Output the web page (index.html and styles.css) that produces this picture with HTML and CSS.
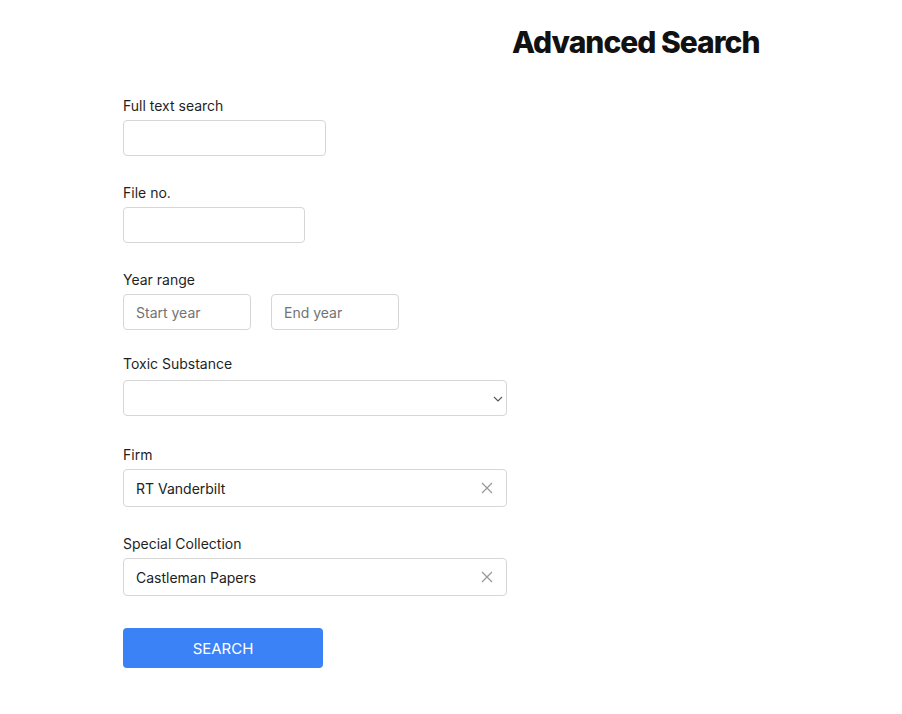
FILE: index.html
```html
<!DOCTYPE html>
<html lang="en">
  <head>
    <meta charset="UTF-8" />
    <meta name="viewport" content="width=device-width, initial-scale=1.0" />
    <title>Advanced Search</title>
    <link rel="stylesheet" href="styles.css">
  </head>
  <body>
    <header class="page-header">
      <h1>Advanced Search</h1>
    </header>

    <form class="search-form">
      <div class="field">
        <label for="fullText">Full text search</label>
        <input type="text" id="fullText" class="text-input w-wide" />
      </div>

      <div class="field">
        <label for="fileNo">File no.</label>
        <input type="text" id="fileNo" class="text-input w-mid" />
      </div>

      <div class="field field-range">
        <label for="startYear">Year range</label>
        <div class="year-range">
          <input type="text" id="startYear" class="text-input w-year" placeholder="Start year" />
          <input type="text" id="endYear" class="text-input w-year" placeholder="End year" />
        </div>
      </div>

      <div class="field field-select">
        <label for="substance">Toxic Substance</label>
        <div class="select-box">
          <select id="substance">
            <option></option>
          </select>
          <svg class="chevron" width="10" height="6" viewBox="0 0 10 6">
            <path d="M1 1l4 4 4-4" fill="none" stroke="#555" stroke-width="1.1" />
          </svg>
        </div>
      </div>

      <div class="field">
        <label>Firm</label>
        <div class="combo">
          <span class="combo-value">RT Vanderbilt</span>
          <svg class="clear" width="12" height="12" viewBox="0 0 12 12">
            <path d="M1 1l10 10M11 1L1 11" stroke="#9a9a9a" stroke-width="1.3" />
          </svg>
        </div>
      </div>

      <div class="field">
        <label>Special Collection</label>
        <div class="combo">
          <span class="combo-value">Castleman Papers</span>
          <svg class="clear" width="12" height="12" viewBox="0 0 12 12">
            <path d="M1 1l10 10M11 1L1 11" stroke="#9a9a9a" stroke-width="1.3" />
          </svg>
        </div>
      </div>

      <button type="button" class="search-btn">SEARCH</button>
    </form>
  </body>
</html>
```

FILE: styles.css
```css
body {
  font-family: "Inter", "Liberation Sans", sans-serif;
  margin: 0;
  color: #1f1f1f;
  background: #fff;
}
.page-header {
  padding: 24px 0 0 512px;
}
h1 {
  margin: 0;
  font-size: 30px;
  line-height: 36px;
  font-weight: 800;
  letter-spacing: -1px;
  color: #111;
}
.search-form {
  padding: 36px 0 40px 123px;
}
.field {
  margin-bottom: 27px;
}
.field-range {
  margin-bottom: 24px;
}
.field-select {
  margin-bottom: 29px;
}
.field-select label {
  margin-bottom: 6px;
}
label {
  display: block;
  font-size: 14px;
  line-height: 20px;
  margin-bottom: 4px;
  color: #1f1f1f;
}
.text-input {
  display: block;
  box-sizing: border-box;
  height: 36px;
  border: 1px solid #d6d6d6;
  border-radius: 4px;
  padding: 0 12px;
  font-family: inherit;
  font-size: 14px;
  color: #222;
  outline: none;
}
.text-input::placeholder {
  color: #737373;
}
.w-wide {
  width: 203px;
}
.w-mid {
  width: 182px;
}
.w-year {
  width: 128px;
}
.year-range {
  display: flex;
  gap: 20px;
}
.select-box {
  position: relative;
  width: 384px;
}
.select-box select {
  display: block;
  width: 100%;
  height: 36px;
  border: 1px solid #d6d6d6;
  border-radius: 4px;
  background: #fff;
  appearance: none;
  font-family: inherit;
  font-size: 14px;
  outline: none;
}
.chevron {
  position: absolute;
  right: 4px;
  top: 16px;
  pointer-events: none;
}
.combo {
  display: flex;
  align-items: center;
  justify-content: space-between;
  box-sizing: border-box;
  width: 384px;
  height: 38px;
  padding: 0 13px 0 12px;
  border: 1px solid #d6d6d6;
  border-radius: 4px;
}
.combo-value {
  font-size: 14px;
  color: #222;
}
.search-btn {
  display: block;
  width: 200px;
  height: 40px;
  margin-top: 32px;
  border: none;
  border-radius: 4px;
  background-color: #3b82f6;
  color: #fff;
  font-family: inherit;
  font-size: 15px;
  cursor: pointer;
}
```
